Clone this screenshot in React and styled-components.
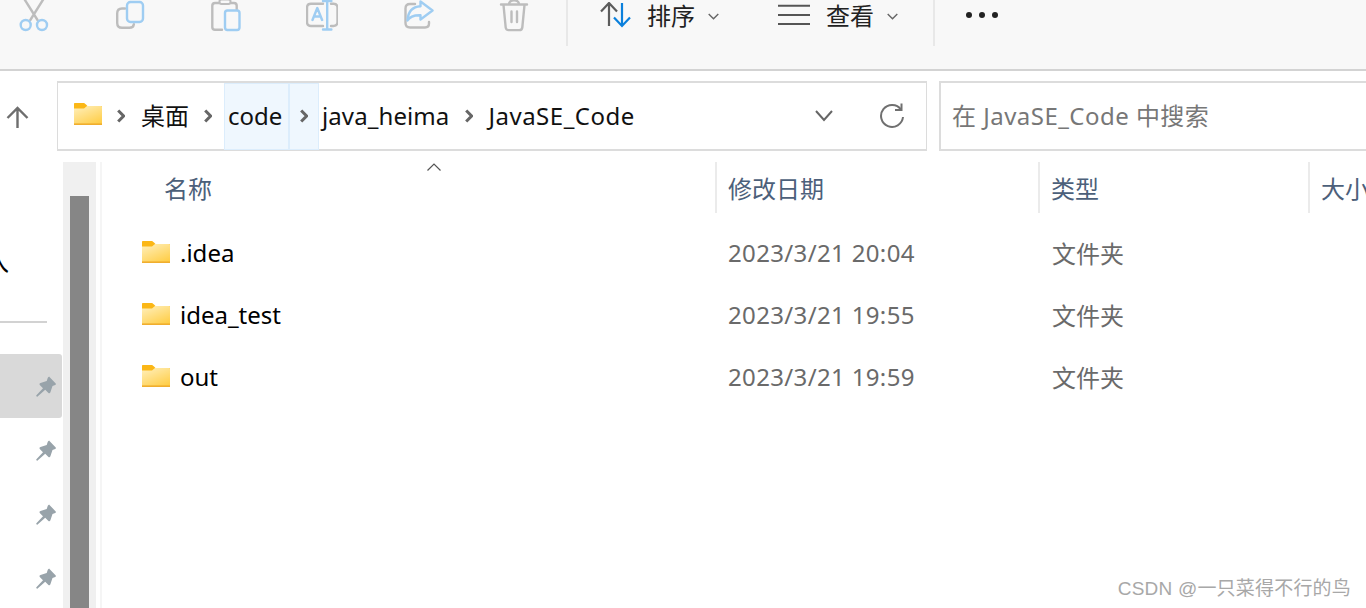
import React from 'react';
import styled, { createGlobalStyle } from 'styled-components';

const GlobalStyle = createGlobalStyle`
  html, body {
    margin: 0;
    padding: 0;
    background: #fff;
    overflow: hidden;
  }
  * {
    box-sizing: border-box;
  }
`;

const PageUI = styled.div`
  position: relative;
  width: 1366px;
  height: 608px;
  overflow: hidden;
  background: #fff;
  color: #111;
  font-family: "Noto Sans", "Noto Sans CJK SC", sans-serif;
  font-size: 24px;
`;

const ToolbarUI = styled.div`
  display: flex;
  align-items: flex-start;
  height: 71px;
  padding-left: 18px;
  background: #f8f8f8;
  border-bottom: 2px solid #d3d3d3;
`;

const ToolIconsUI = styled.div`
  display: flex;
  gap: 64px;
`;

const ToolIconUI = styled.svg`
  display: block;
  width: 32px;
  height: 36px;
  fill: none;
  stroke-width: 2.4;
  stroke-linecap: round;
  stroke-linejoin: round;
`;

const ToolSepUI = styled.div`
  width: 2px;
  height: 46px;
  margin: 0 ${({ right }) => right}px 0 ${({ left }) => left}px;
  background: #e8e8e8;
`;

const MenuButtonUI = styled.div`
  display: flex;
  align-items: center;
  height: 32px;
  color: #222;
  margin-right: ${({ right }) => right || 0}px;
`;

const MenuLabelUI = styled.span`
  margin: 0 13px 0 ${({ left }) => left}px;
  line-height: 32px;
`;

const CaretUI = styled.svg`
  width: 11px;
  height: 7px;
  fill: none;
  stroke: #666;
  stroke-width: 1.4;
`;

const MoreUI = styled.div`
  display: flex;
  gap: 7px;
  padding-top: 12px;
  span {
    width: 6px;
    height: 6px;
    border-radius: 50%;
    background: #222;
  }
`;

const AddressRowUI = styled.div`
  display: flex;
  align-items: stretch;
  height: 70px;
  margin-top: 10px;
`;

const BackUI = styled.div`
  display: flex;
  align-items: center;
  flex-shrink: 0;
  width: 57px;
  padding-left: 6px;
  padding-top: 3px;
`;

const AddressBoxUI = styled.div`
  display: flex;
  align-items: center;
  flex-shrink: 0;
  width: 870px;
  padding-left: 16px;
  border: 2px solid #dcdcdc;
  border-left-width: 1px;
  border-right-width: 1px;
  background: #fff;
`;

const CrumbUI = styled.span`
  display: flex;
  align-items: center;
  flex-shrink: 0;
  height: 67px;
  line-height: 1;
  letter-spacing: ${({ spacing }) => spacing || 0}px;
  width: ${({ w }) => (w ? `${w}px` : 'auto')};
  padding-left: ${({ pad }) => pad || 0}px;
  margin-left: ${({ left }) => left || 0}px;
  justify-content: ${({ center }) => (center ? 'center' : 'flex-start')};
  ${({ hot }) => hot && `
    background: #eff7fe;
    border: 1px solid #dcedfc;
  `}
`;

const ChevronUI = styled.svg`
  display: block;
  width: 8px;
  height: 14px;
  fill: none;
  stroke: #666;
  stroke-width: 3;
  margin: 0 ${({ right }) => right}px 0 ${({ left }) => left}px;
`;

const AddressEndUI = styled.div`
  display: flex;
  align-items: center;
  gap: 46px;
  margin-left: auto;
  padding-right: 21px;
`;

const SearchBoxUI = styled.div`
  display: flex;
  align-items: center;
  flex-shrink: 0;
  width: 460px;
  margin-left: 12px;
  padding: 0 0 3px 11px;
  border: 2px solid #dcdcdc;
  color: #777;
  letter-spacing: 0.47px;
`;

const BodyUI = styled.div`
  display: flex;
  height: 446px;
  margin-top: 11px;
`;

const SidebarUI = styled.div`
  width: 63px;
  flex-shrink: 0;
`;

const SideTopUI = styled.div`
  height: 161px;
  padding-top: 83px;
  border-bottom: 2px solid #d2d2d2;
  margin-right: 16px;
`;

const ClippedLabelUI = styled.div`
  display: flex;
  justify-content: flex-end;
  width: 9px;
  height: 34px;
  overflow: hidden;
  line-height: 34px;
  color: #000;
`;

const PinListUI = styled.div`
  margin-top: 31px;
`;

const PinRowUI = styled.div`
  display: flex;
  align-items: center;
  justify-content: flex-end;
  height: 64px;
  width: 62px;
  padding-right: 6px;
  border-radius: 0 3px 3px 0;
  background: ${({ active }) => (active ? '#d9d9d9' : 'transparent')};
`;

const ScrollTrackUI = styled.div`
  width: 33px;
  flex-shrink: 0;
  padding: 34px 7px 0;
  background: #f0f0f0;
`;

const ScrollThumbUI = styled.div`
  height: 100%;
  background: #868686;
`;

const MainUI = styled.div`
  position: relative;
  flex: 1;
  margin-left: 4px;
  border-left: 2px solid #f5f5f5;
`;

const GridRowUI = styled.div`
  display: grid;
  grid-template-columns: 613px 323px 270px 1fr;
  height: ${({ h }) => h}px;
  align-items: ${({ head }) => (head ? 'start' : 'center')};
  padding-bottom: ${({ head }) => (head ? 0 : 2)}px;
`;

const HeadCellUI = styled.div`
  display: flex;
  align-items: center;
  height: 51px;
  padding: 0 0 1px ${({ pad }) => pad}px;
  color: #4c607a;
  white-space: nowrap;
  ${({ divider }) => divider && 'border-left: 2px solid #ebebeb;'}
`;

const SortCaretUI = styled.svg`
  position: absolute;
  left: 325px;
  top: 1px;
  width: 14px;
  height: 8px;
  fill: none;
  stroke: #555;
  stroke-width: 1.2;
`;

const NameCellUI = styled.div`
  display: flex;
  align-items: center;
  gap: 10px;
  padding-left: 40px;
  color: #000;
`;

const InfoCellUI = styled.div`
  padding-left: ${({ pad }) => pad}px;
  letter-spacing: ${({ spacing }) => spacing || 0}px;
  color: #6a6a6a;
`;

const WatermarkUI = styled.div`
  position: absolute;
  right: 15px;
  top: 578px;
  font-family: "Liberation Sans", "Noto Sans CJK SC", sans-serif;
  font-size: 19px;
  letter-spacing: 0.2px;
  line-height: 22px;
  color: #a8a8a8;
`;

const FolderSvgUI = styled.svg`
  display: block;
  flex-shrink: 0;
  width: 28px;
  height: 22px;
  margin-bottom: ${({ lift }) => lift || 0}px;
`;

const GRAY = '#bdbdbd';
const BLUE = '#9fcdf2';

const FolderIcon = ({ id, lift }) => (
  <FolderSvgUI lift={lift} viewBox="0 0 28 22">
    <defs>
      <linearGradient id={id} x1="0.2" y1="0" x2="0.8" y2="1">
        <stop offset="0" stopColor="#ffedb4" />
        <stop offset="1" stopColor="#ffcd45" />
      </linearGradient>
    </defs>
    <path d="M1 0h8.5c1 0 1.5.6 2.5 1.5L13.5 3H28v4H0V1c0-.6.4-1 1-1z" fill="#fbb716" />
    <path d="M0 5.5L10 5.5L13 3H27c.6 0 1 .4 1 1v17c0 .6-.4 1-1 1H1c-.6 0-1-.4-1-1z" fill={`url(#${id})`} />
    <path d="M0 21.2h28" stroke="#f0ae2e" strokeWidth="1.6" />
  </FolderSvgUI>
);

const PinIcon = () => (
  <svg width="21" height="21" viewBox="0 0 21 21">
    <path
      d="M14 .6l6.500 6.600c.7.7.6 1.400-.3 1.800l-2.700 1-2.100 6.200c-.4 1.200-1.300 1.400-2.200.5l-3-3-7.600 6.800c-.8.6-1.800-.3-1.200-1.200L8 12.200l-3-3c-.9-.9-.7-1.800.5-2.200l6.200-2.100 1-2.800c.3-1 1-1 1.800-1.500z"
      fill="#98a3aa"
    />
  </svg>
);

const Caret = () => (
  <CaretUI viewBox="0 0 11 7">
    <path d="M.7 1l4.800 4.800L10.300 1" />
  </CaretUI>
);

const Chevron = ({ left, right }) => (
  <ChevronUI left={left} right={right} viewBox="0 0 8 14">
    <path d="M1.200 1.500L6.600 7l-5.400 5.500" />
  </ChevronUI>
);

const files = [
  { name: '.idea', date: '2023/3/21 20:04' },
  { name: 'idea_test', date: '2023/3/21 19:55' },
  { name: 'out', date: '2023/3/21 19:59' },
];

const App = () => (
  <PageUI>
    <GlobalStyle />
    <ToolbarUI>
      <ToolIconsUI>
        <ToolIconUI viewBox="18 0 32 36">
          <path d="M24.300 -1L37.500 20M43.500 -1L30.300 20" stroke={GRAY} />
          <circle cx="25.700" cy="25" r="5" stroke={BLUE} />
          <circle cx="42" cy="25" r="5" stroke={BLUE} />
        </ToolIconUI>
        <ToolIconUI viewBox="114 0 32 36">
          <path d="M125 8.500h-3c-3 0-4.800 2-4.800 4.800V23c0 3 2 4.800 4.800 4.800h7.500c2.600 0 4-1.300 4.400-3.600" stroke={GRAY} />
          <rect x="127" y="2" width="16" height="20" rx="3.500" stroke={BLUE} />
        </ToolIconUI>
        <ToolIconUI viewBox="210 0 32 36">
          <path d="M219 3h-4c-1.700 0-2.700 1-2.700 2.700V27c0 1.800 1 2.800 2.700 2.800h7M231 3h3c1.700 0 2.700 1 2.700 2.700V9" stroke={GRAY} />
          <rect x="219.500" y="-.5" width="11" height="4.500" rx="2" stroke={GRAY} strokeWidth="2" />
          <rect x="225" y="10.500" width="14.500" height="19.500" rx="2.500" stroke={BLUE} />
        </ToolIconUI>
        <ToolIconUI viewBox="306 0 32 36">
          <path d="M323 3.800h-12c-2.400 0-4 1.600-4 4V22c0 2.400 1.600 4 4 4h12M331 3.800h2.500c2.400 0 4 1.600 4 4V22c0 2.400-1.600 4-4 4H331" stroke={GRAY} />
          <path d="M327.200 1v28.500M323 1h8.400M323 29.500h8.400M312.500 20l4.800-12 4.800 12M314 16.500h6.600" stroke={BLUE} />
        </ToolIconUI>
        <ToolIconUI viewBox="402 0 32 36">
          <path d="M415 4h-5c-2.700 0-4.500 1.800-4.500 4.500V23c0 2.700 1.800 4.500 4.500 4.500h15c2.700 0 4-1.500 4-4V22" stroke={GRAY} />
          <path d="M420.500 1.500L432.500 10.500L420.500 19.500V15.200C414 15 410 16 407.500 20.500C408 12 412.500 6.800 420.500 6.300z" stroke={BLUE} />
        </ToolIconUI>
        <ToolIconUI viewBox="498 0 32 36">
          <path d="M501 4.500h26M503.500 5l2.200 22.500c.2 1.800 1.200 2.600 3 2.600h10.600c1.800 0 2.800-.8 3-2.600L524.500 5M509 4c0-5 10-5 10 0M511.500 11.500V22M517 11.500V22" stroke={GRAY} />
        </ToolIconUI>
      </ToolIconsUI>
      <ToolSepUI left={36} right={32} />
      <MenuButtonUI right={59}>
        <svg width="32" height="28" viewBox="0 0 32 28" fill="none" strokeWidth="2.200">
          <path d="M9 1v23M1 9.500L9 1l8 8.500" stroke="#5c5c5c" />
          <path d="M22 1v23M14 15.500L22 24l8-8.500" stroke="#0b80dc" />
        </svg>
        <MenuLabelUI left={15}>排序</MenuLabelUI>
        <Caret />
      </MenuButtonUI>
      <MenuButtonUI>
        <svg width="32" height="28" viewBox="0 0 32 28" fill="none" stroke="#555" strokeWidth="2">
          <path d="M0 3.700h32M0 13h32M0 22h32" />
        </svg>
        <MenuLabelUI left={16}>查看</MenuLabelUI>
        <Caret />
      </MenuButtonUI>
      <ToolSepUI left={35} right={31} />
      <MoreUI>
        <span />
        <span />
        <span />
      </MoreUI>
    </ToolbarUI>

    <AddressRowUI>
      <BackUI>
        <svg width="23" height="23" viewBox="0 0 23 23" fill="none" stroke="#6e6e6e" strokeWidth="2.400">
          <path d="M11.500 22V2M1.500 12L11.500 2l10 10" />
        </svg>
      </BackUI>
      <AddressBoxUI>
        <FolderIcon id="crumb-folder" lift={4} />
        <Chevron left={15} right={16} />
        <CrumbUI>桌面</CrumbUI>
        <Chevron left={15} right={12} />
        <CrumbUI hot pad={3} w={65}>code</CrumbUI>
        <CrumbUI hot center w={30}>
          <Chevron left={0} right={0} />
        </CrumbUI>
        <CrumbUI left={3} spacing={0.1}>java_heima</CrumbUI>
        <Chevron left={16} right={15} />
        <CrumbUI spacing={0.5}>JavaSE_Code</CrumbUI>
        <AddressEndUI>
          <svg width="18" height="12" viewBox="0 0 18 12" fill="none" stroke="#666" strokeWidth="2">
            <path d="M1 1l8 9 8-9" />
          </svg>
          <svg width="26" height="26" viewBox="0 0 26 26" fill="none" stroke="#707070" strokeWidth="2">
            <path d="M22 6.500A11 11 0 1 0 24 14" />
            <path d="M22.500 .5V7H16" />
          </svg>
        </AddressEndUI>
      </AddressBoxUI>
      <SearchBoxUI>在 JavaSE_Code 中搜索</SearchBoxUI>
    </AddressRowUI>

    <BodyUI>
      <SidebarUI>
        <SideTopUI>
          <ClippedLabelUI>入</ClippedLabelUI>
        </SideTopUI>
        <PinListUI>
          <PinRowUI active><PinIcon /></PinRowUI>
          <PinRowUI><PinIcon /></PinRowUI>
          <PinRowUI><PinIcon /></PinRowUI>
          <PinRowUI><PinIcon /></PinRowUI>
        </PinListUI>
      </SidebarUI>
      <ScrollTrackUI>
        <ScrollThumbUI />
      </ScrollTrackUI>
      <MainUI>
        <SortCaretUI viewBox="0 0 14 8">
          <path d="M.5 7.500L7 1l6.500 6.500" />
        </SortCaretUI>
        <GridRowUI head h={60}>
          <HeadCellUI pad={62}>名称</HeadCellUI>
          <HeadCellUI pad={11} divider>修改日期</HeadCellUI>
          <HeadCellUI pad={11} divider>类型</HeadCellUI>
          <HeadCellUI pad={11} divider>大小</HeadCellUI>
        </GridRowUI>
        {files.map((file, idx) => (
          <GridRowUI h={62} key={file.name}>
            <NameCellUI>
              <FolderIcon id={`row-folder-${idx}`} />
              {file.name}
            </NameCellUI>
            <InfoCellUI pad={13} spacing={0.35}>{file.date}</InfoCellUI>
            <InfoCellUI pad={14}>文件夹</InfoCellUI>
            <span />
          </GridRowUI>
        ))}
      </MainUI>
    </BodyUI>
    <WatermarkUI>CSDN @一只菜得不行的鸟</WatermarkUI>
  </PageUI>
);

export default App;
